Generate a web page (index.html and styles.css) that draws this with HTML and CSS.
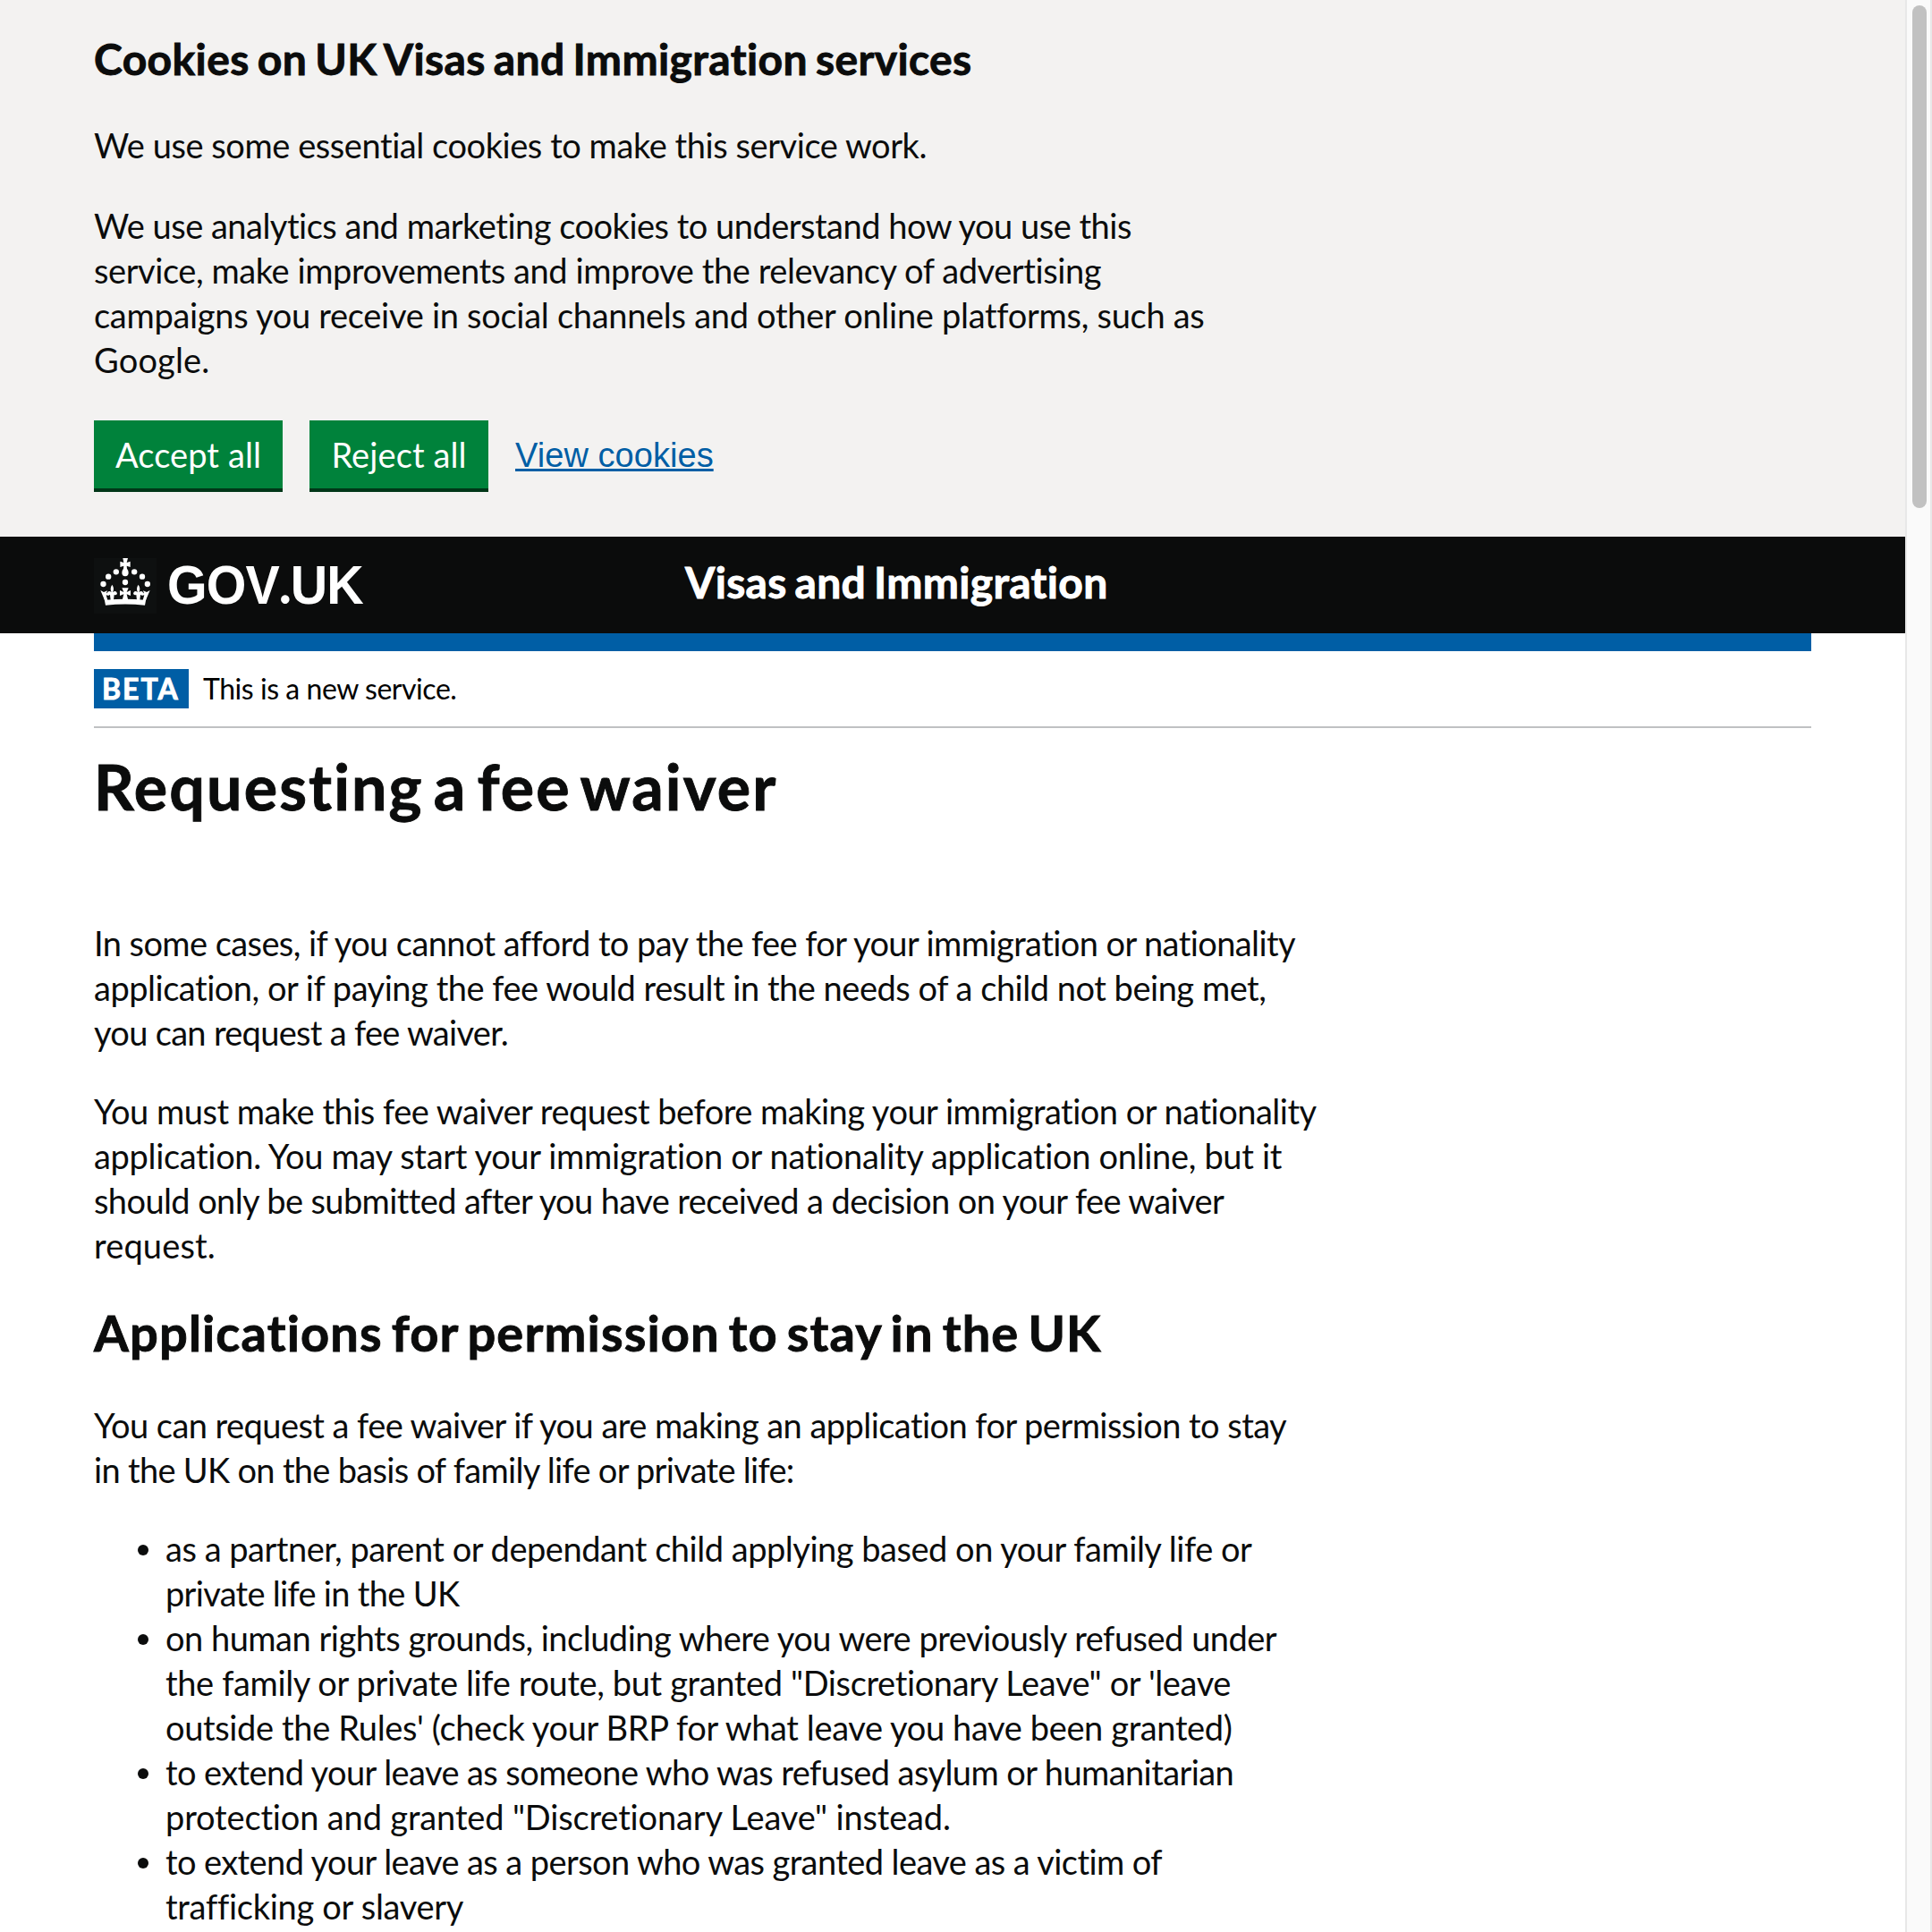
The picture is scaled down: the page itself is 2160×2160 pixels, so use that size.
FILE: index.html
```html
<!DOCTYPE html>
<html lang="en">
<head>
<meta charset="utf-8">
<title>Requesting a fee waiver</title>
<link rel="stylesheet" href="styles.css">
</head>
<body>
<div class="page">
  <section class="cookies">
    <h2 class="cookies-title">Cookies on UK Visas and Immigration services</h2>
    <p><span class="t44">We use some essential cookies to make this service work.</span></p>
    <p>
      <span class="t50">We use analytics and marketing cookies to understand how you use this</span>
      <span class="t42">service, make improvements and improve the relevancy of advertising</span>
      <span class="t29">campaigns you receive in social channels and other online platforms, such as</span>
      <span class="wide">Google.</span>
    </p>
    <div class="actions">
      <button class="button accept">Accept all</button>
      <button class="button reject">Reject all</button>
      <a class="link" href="#">View cookies</a>
    </div>
  </section>
  <header class="header">
    <div class="brand">
      <svg class="crown" viewBox="45 72 210 186" width="70" height="62" aria-hidden="true">
        <g fill="#fff">
          <circle cx="76.5" cy="159" r="9.5"/><circle cx="93.5" cy="134" r="9.5"/><circle cx="119.5" cy="118" r="9.5"/>
          <circle cx="180.5" cy="118" r="9.5"/><circle cx="207" cy="134" r="9.5"/><circle cx="224.5" cy="159" r="9.5"/>
          <circle cx="150" cy="153" r="9.5"/>
          <path d="M142 72h17l-4 15 12-4v19l-12-4 1 9q5 6 5 14 0 12-11 12t-11-12q0-8 5-14l1-9-12 4V83l12 4z"/>
          <path d="M79 204L86 212Q150 206 214 212L221 204L216 230Q150 223 84 230Z"/>
          <path d="M67 180L78 186L90 181L87 190L95 188V198L86 196L91 213H81Z"/>
          <path d="M233 180L222 186L210 181L213 190L205 188V198L214 196L209 213H219Z"/>
          <path d="M106 161Q115 174 108 187Q118 178 123 190Q122 198 113 195L111 213H101L99 195Q90 198 89 190Q94 178 104 187Q97 174 106 161Z"/>
          <path d="M194 161Q185 174 192 187Q182 178 177 190Q178 198 187 195L189 213H199L201 195Q210 198 211 190Q206 178 196 187Q203 174 194 161Z"/>
          <path d="M139 172H161L155 186L168 180V198L155 193L160 213H140L145 193L132 198V180L145 186Z"/>
        </g>
      </svg>
      <span class="logotype">GOV<span class="dot">.</span>UK</span>
    </div>
    <span class="service">Visas and Immigration</span>
  </header>
  <main class="main">
    <div class="bar"></div>
    <div class="phase">
      <strong class="tag">BETA</strong>
      <span class="phase-text">This is a new service.</span>
    </div>
    <h1>Requesting a fee waiver</h1>
    <p>
      <span class="t59">In some cases, if you cannot afford to pay the fee for your immigration or nationality</span>
      <span class="t48">application, or if paying the fee would result in the needs of a child not being met,</span>
      <span class="t68">you can request a fee waiver.</span>
    </p>
    <p>
      <span class="t50">You must make this fee waiver request before making your immigration or nationality</span>
      <span class="t33">application. You may start your immigration or nationality application online, but it</span>
      <span class="t60">should only be submitted after you have received a decision on your fee waiver</span>
      <span class="wide">request.</span>
    </p>
    <h2>Applications for permission to stay in the UK</h2>
    <p>
      <span class="t55">You can request a fee waiver if you are making an application for permission to stay</span>
      <span class="t68">in the UK on the basis of family life or private life:</span>
    </p>
    <ul>
      <li><div>
        <span class="t48">as a partner, parent or dependant child applying based on your family life or</span>
        <span class="t68">private life in the UK</span>
      </div></li>
      <li><div>
        <span class="t50">on human rights grounds, including where you were previously refused under</span>
        <span class="t37">the family or private life route, but granted "Discretionary Leave" or 'leave</span>
        <span class="t37">outside the Rules' (check your BRP for what leave you have been granted)</span>
      </div></li>
      <li><div>
        <span class="t59">to extend your leave as someone who was refused asylum or humanitarian</span>
        <span class="t15">protection and granted "Discretionary Leave" instead.</span>
      </div></li>
      <li><div>
        <span class="t59">to extend your leave as a person who was granted leave as a victim of</span>
        <span class="t29">trafficking or slavery</span>
      </div></li>
    </ul>
  </main>
</div>
<div class="scrollbar"><div class="thumb"></div></div>
</body>
</html>
```
FILE: styles.css
```css
* { box-sizing: border-box; }
body {
  margin: 0;
  display: flex;
  width: 2160px;
  height: 2160px;
  overflow: hidden;
  background: #fff;
  color: #0b0c0c;
  font: 38px/50px Lato, "Liberation Sans", sans-serif;
  font-variant-ligatures: none;
}
h1, h2, p, ul { margin: 0; padding: 0; }
h1, h2, .service, .tag { -webkit-text-stroke: .9px currentColor; }
.page { width: 2130px; flex: none; }

/* Per-line tracking */
p span, li span { display: block; white-space: nowrap; }
.wide { letter-spacing: .15px; }
.t15 { letter-spacing: -.15px; }
.t29 { letter-spacing: -.29px; }
.t33 { letter-spacing: -.33px; }
.t37 { letter-spacing: -.37px; }
.t42 { letter-spacing: -.42px; }
.t44 { letter-spacing: -.44px; }
.t48 { letter-spacing: -.48px; }
.t50 { letter-spacing: -.5px; }
.t55 { letter-spacing: -.555px; }
.t59 { letter-spacing: -.585px; }
.t60 { letter-spacing: -.605px; }
.t68 { letter-spacing: -.7px; }

.cookies {
  height: 600px;
  padding: 36px 105px 0;
  background: #f3f2f1;
}
.cookies-title {
  margin-bottom: 41px;
  font-size: 48px;
  line-height: 60px;
  letter-spacing: .38px;
  word-spacing: -3px;
}
.cookies p { margin-bottom: 40px; }
.actions {
  display: flex;
  gap: 30px;
  padding-top: 3px;
}
.button {
  height: 80px;
  padding: 19px 0 19px;
  border: 0;
  border-bottom: 4px solid #003618;
  background: #00823b;
  color: #fff;
  font: 38px/38px Lato, sans-serif;
  letter-spacing: .1px;
}
.accept { width: 211px; }
.reject { width: 200px; }
.link {
  padding-top: 19px;
  color: #005ea5;
  font: 38px/40px "Liberation Sans", Arial, sans-serif;
  letter-spacing: .05px;
  text-decoration: underline;
  text-decoration-thickness: 3px;
  text-underline-offset: 2px;
  text-decoration-skip-ink: none;
}

.header {
  display: flex;
  height: 108px;
  padding: 0 105px;
  background: #0b0c0c;
  color: #fff;
}
.brand {
  display: flex;
  gap: 12px;
  width: 661px;
  padding-top: 24px;
}
.crown { background: #0e1010; }
.logotype {
  font: bold 61px/60px "Liberation Sans", Arial, sans-serif;
  letter-spacing: -.9px;
  transform: scaleX(.94);
  transform-origin: left;
}
.dot { font-family: Lato, sans-serif; font-weight: 900; line-height: 0; }
.service {
  padding-top: 21px;
  font-size: 48px;
  font-weight: bold;
  line-height: 60px;
  letter-spacing: .3px;
  word-spacing: -3px;
}

.main { padding: 0 105px; }
.bar { height: 20px; background: #005ea5; }
.phase {
  display: flex;
  gap: 16px;
  padding: 20px 0;
  border-bottom: 2px solid #bfc1c3;
  color: #000;
  font-size: 32px;
  line-height: 44px;
}
.tag {
  width: 106px;
  height: 44px;
  padding-left: 9px;
  background: #005ea5;
  color: #fff;
  letter-spacing: 2px;
}
.phase-text { letter-spacing: -.45px; }
h1 {
  margin: 25px 0 110px;
  font-size: 70px;
  line-height: 80px;
  letter-spacing: 2.1px;
  word-spacing: -8px;
}
.main h2 {
  margin: 43px 0 48px;
  font-size: 56px;
  line-height: 60px;
  letter-spacing: 1.15px;
  word-spacing: -4.8px;
}
.main p + p { margin-top: 38px; }
ul {
  margin-top: 38px;
  padding-left: 49px;
  list-style: none;
}
li { display: flex; gap: 19px; }
li::before {
  content: "";
  flex: none;
  width: 12px;
  height: 12px;
  margin-top: 21px;
  border-radius: 50%;
  background: #0b0c0c;
}

.scrollbar {
  width: 30px;
  height: 2160px;
  padding: 6px 4px 0 6px;
  border: solid #e8e8e8;
  border-width: 0 2px;
  background: #fafafa;
}
.thumb {
  width: 16px;
  height: 562px;
  border-radius: 8px;
  background: #c1c1c1;
}
```
